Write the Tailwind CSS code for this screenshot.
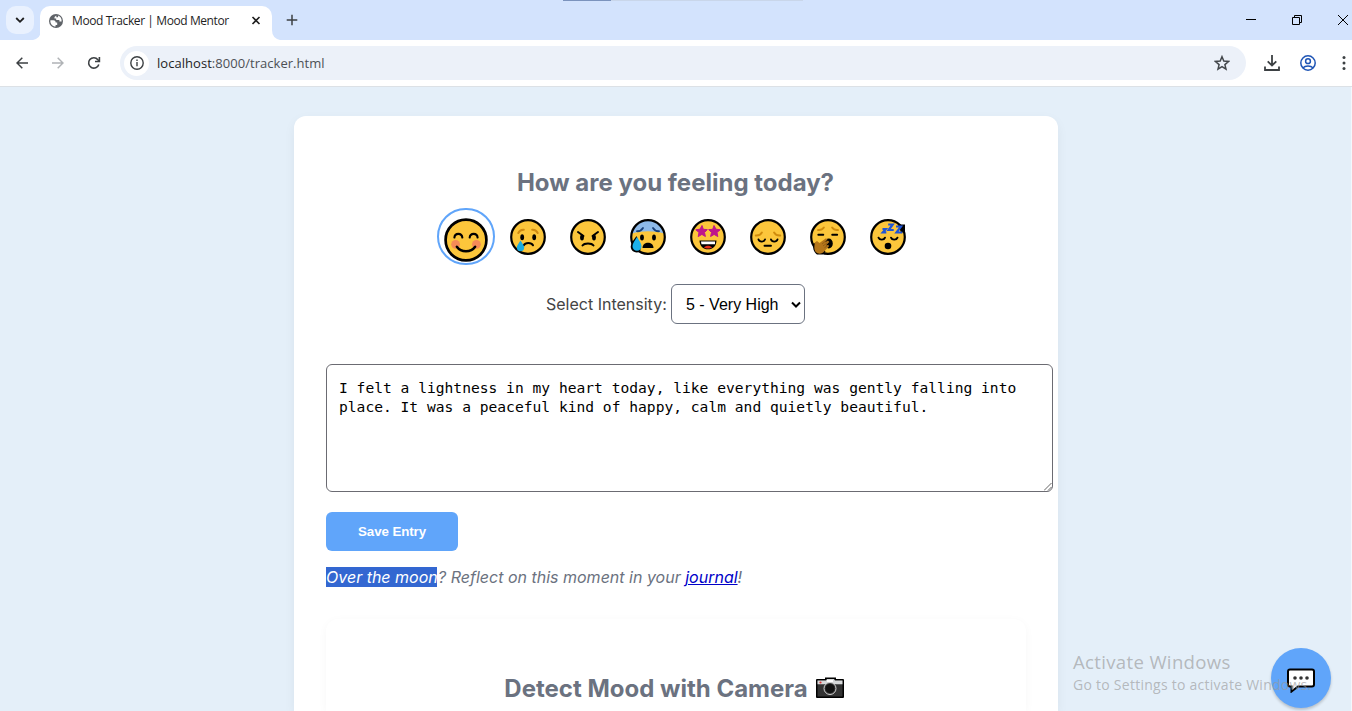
<!DOCTYPE html>
<html lang="en">
<head>
<meta charset="utf-8">
<title>Mood Tracker | Mood Mentor</title>
<script src="https://cdn.jsdelivr.net/npm/@tailwindcss/browser@4"></script>
</head>
<body class="relative flex h-[711px] w-[1352px] flex-col overflow-hidden bg-[#e4eff9] font-['Inter',sans-serif]">

<!-- Tab strip -->
<header class="relative flex h-10 shrink-0 items-start bg-[#d3e3fd] pt-1.5 pl-1.5">
  <div class="absolute top-0 left-[563px] h-px w-12 bg-[#7b93bd]"></div>
  <div class="absolute top-0 left-[611px] h-px w-[192px] bg-[#c9d6ea]"></div>
  <button class="flex h-7 w-7 items-center justify-center rounded-[10px] bg-[#e9f1fe]">
    <svg class="h-[10px] w-[10px]" viewBox="0 0 10 10" fill="none" stroke="#1f1f1f" stroke-width="1.8"><path d="M1.2 3 5 6.8 8.8 3"/></svg>
  </button>
  <svg class="mt-6 -ml-px h-[10px] w-2 shrink-0" viewBox="0 0 8 10"><path d="M8 0v10H0Q8 8 8 0Z" fill="#fff"/></svg>
  <div class="-ml-px flex h-[34px] w-[232px] items-center rounded-t-[10px] bg-white pr-2.5 pb-[5px] pl-[9px]">
    <svg class="h-[14px] w-[14px] shrink-0" viewBox="0 0 14 14"><circle cx="7" cy="7" r="7" fill="#5f6368"/><path d="M7.300 1.400 5.500 3.100v1.300h1.700v1.500h3.200v1.600h2.200c.3-2.600-1-5.100-3.500-5.900V3.200H7.300ZM1.400 6.200h2.900c1.800 0 2.400 1.200 2.400 2.400h1.500v2.300H6.600v1.700C3.500 12.500 1 9.500 1.400 6.200Z" fill="#fff"/></svg>
    <span class="ml-[9px] w-[160px] text-[12px] leading-4 tracking-[-0.41px] whitespace-nowrap text-[#1f1f1f] font-['Open_Sans',sans-serif]">Mood Tracker | Mood Mentor</span>
    <svg class="ml-auto h-3 w-3 shrink-0" viewBox="0 0 12 12" stroke="#1f1f1f" stroke-width="1.6"><path d="m2.500 2 7 7m0-7-7 7"/></svg>
  </div>
  <svg class="mt-6 h-[10px] w-2 shrink-0" viewBox="0 0 8 10"><path d="M0 0v10H8Q0 8 0 0Z" fill="#fff"/></svg>
  <svg class="mt-2 ml-1.5 h-3 w-3" viewBox="0 0 12 12" stroke="#3c4043" stroke-width="1.5"><path d="M6 .7v10.6M.7 6h10.6"/></svg>
  <div class="ml-auto flex h-7 items-center gap-[34px] pr-1 text-black">
    <svg class="h-3 w-3" viewBox="0 0 12 12" stroke="#000"><path d="M1 5.500h10"/></svg>
    <svg class="h-3 w-3" viewBox="0 0 12 12" fill="none" stroke="#000"><path d="M1.500 3.500h7v7h-7zM3.500 3.500v-2h7v7h-2"/></svg>
    <svg class="-mr-px h-3 w-3" viewBox="0 0 12 12" stroke="#000"><path d="m1 1 10 10M11 1 1 11"/></svg>
  </div>
</header>

<!-- Toolbar -->
<div class="flex h-[47px] shrink-0 items-center border-b border-[#dce1e6] bg-white pl-4">
  <svg class="h-3 w-3" viewBox="0 0 12 12" fill="none" stroke="#3c4043" stroke-width="1.5"><path d="M6.300.8 1 6l5.300 5.200M1 6h11"/></svg>
  <svg class="ml-6 h-3 w-3" viewBox="0 0 12 12" fill="none" stroke="#b0b3b6" stroke-width="1.5"><path d="M5.700.8 11 6l-5.300 5.200M11 6H0"/></svg>
  <svg class="ml-[23px] h-[14px] w-[14px]" viewBox="0 0 14 14" fill="none" stroke="#3c4043" stroke-width="1.6"><path d="M11.800 8.500A5.200 5.200 0 1 1 10.900 3.700L12.300 5.200"/><path d="M12.400 1v4.500H8"/></svg>
  <div class="ml-[19px] flex h-[34px] w-[1126px] items-center rounded-full bg-[#ecf1f9] pr-4 pl-1">
    <span class="flex h-[25px] w-[25px] items-center justify-center rounded-full bg-white">
      <svg class="h-[14px] w-[14px]" viewBox="0 0 14 14" fill="none" stroke="#3c4043" stroke-width="1.4"><circle cx="7" cy="7" r="6.200"/><path d="M7 6v4.300M7 3.500V5"/></svg>
    </span>
    <span class="ml-2 text-[13px] leading-5 tracking-[0.04px] whitespace-nowrap text-[#4c5055] font-['Open_Sans',sans-serif]"><span class="text-[#1f1f1f]">localhost</span>:8000/tracker.html</span>
    <svg class="ml-auto h-4 w-4" viewBox="0 0 16 16" fill="none" stroke="#43474b" stroke-width="1.5"><path d="m8 1.700 1.800 4.400 4.700.4-3.600 3.100 1.100 4.600L8 11.700l-4 2.500 1.100-4.600L1.500 6.500l4.700-.4Z"/></svg>
  </div>
  <svg class="ml-[18px] h-4 w-4" viewBox="0 0 16 16" fill="none" stroke="#3c4043" stroke-width="1.800"><path d="M8 0v10.200M3.700 6.300 8 10.500l4.300-4.200M1 11.500V15h14v-3.500"/></svg>
  <svg class="ml-5 h-4 w-4" viewBox="0 0 16 16" fill="none" stroke="#1f55b5" stroke-width="1.500"><circle cx="8" cy="8" r="7.200"/><circle cx="8" cy="6.200" r="2.400"/><path d="M2.800 12.900c2.600-2.700 7.800-2.700 10.400 0"/></svg>
  <svg class="ml-[26px] h-4 w-1" viewBox="0 0 4 16" fill="#3c4043"><circle cx="2" cy="2.500" r="1.500"/><circle cx="2" cy="8" r="1.500"/><circle cx="2" cy="13.500" r="1.500"/></svg>
</div>

<!-- Page -->
<main class="flex min-h-0 flex-1 justify-center pt-[29px]">
  <section class="h-[595px] w-[764px] rounded-t-xl bg-white px-8 pt-[51px] shadow-[0_4px_12px_rgba(0,0,0,0.05)]">
    <h2 class="-ml-px text-center text-[24px] leading-8 font-bold text-[#6b7280]">How are you feeling today?</h2>

    <div class="mt-[9px] flex h-[57px] items-center pl-[111px]">
      <div class="flex h-[57px] w-[58px] shrink-0 items-end justify-center rounded-full border-2 border-[#60a5fa] pb-px">
        <svg class="h-[44px] w-[44px]" viewBox="0 0 36 36"><circle cx="18" cy="18" r="16.700" fill="#fcc63b" stroke="#000" stroke-width="2.200"/><circle cx="9.500" cy="21.500" r="3.600" fill="#f58a57"/><circle cx="26.500" cy="21.500" r="3.600" fill="#f58a57"/><g fill="none" stroke="#000" stroke-width="1.700" stroke-linecap="round"><path d="M8.500 16c.4-4 6-4 6.500 0M21 16c.5-4 6.100-4 6.500 0"/><path d="M10.500 23.500c3.500 5 11.500 5 15 0" stroke-width="2"/></g></svg>
      </div>
      <div class="ml-[14.5px] flex gap-6">
        <svg class="h-9 w-9" viewBox="0 0 36 36"><circle cx="18" cy="18" r="16.800" fill="#fcc63b" stroke="#000" stroke-width="2.200"/><g fill="none" stroke="#cf8b12" stroke-width="2" stroke-linecap="round"><path d="M8.300 14c1-2.200 3.300-3.500 5.500-3.300M22.200 10.700c2.300-.2 4.500 1.100 5.500 3.300"/></g><ellipse cx="12.200" cy="18.300" rx="1.900" ry="3"/><ellipse cx="24.200" cy="18.300" rx="1.900" ry="3"/><path d="M13.800 26.300c1.500-3 7.500-3 9.200 0" fill="none" stroke="#000" stroke-width="2" stroke-linecap="round"/><path d="M10.500 21.500c-1.800 3-3.700 5-3.700 7a3.700 3.700 0 0 0 7.400 0c0-2-1.900-4-3.700-7Z" fill="#1aacdf"/></svg>
        <svg class="h-9 w-9" viewBox="0 0 36 36"><circle cx="18" cy="18" r="16.800" fill="#fcc63b" stroke="#000" stroke-width="2.200"/><g fill="none" stroke="#000" stroke-width="2" stroke-linecap="round"><path d="m8 13 5.500 4M28 13l-5.500 4M12.500 26.500c1.800-2.700 9.200-2.700 11 0"/></g><ellipse cx="12" cy="18.500" rx="1.900" ry="2.900"/><ellipse cx="24" cy="18.500" rx="1.900" ry="2.900"/></svg>
        <svg class="h-9 w-9 overflow-visible" viewBox="0 0 36 36"><circle cx="18" cy="18" r="16.800" fill="#fcc63b"/><path d="M1.800 14.500C3 6.500 10 1.200 18 1.200s15 5.300 16.200 13.300C24 11.500 12 11.500 1.800 14.500Z" fill="#8db9e8"/><circle cx="18" cy="18" r="16.800" fill="none" stroke="#000" stroke-width="2.200"/><path d="M6.500 17c-3 4-5.800 7.500-5.800 10.800A6 6 0 0 0 10 32.500l1-5Z" fill="#000"/><path d="M7 18c-2.300 4-4.500 6.500-4.500 9.200a4.500 4.500 0 0 0 9 0C11.500 24.500 9.300 22 7 18Z" fill="#1db2ea"/><g fill="none" stroke="#173f78" stroke-width="1.800" stroke-linecap="round"><path d="M7 12.200c2.500.2 4.600-.9 6-3.200M29 12.200c-2.500.2-4.600-.9-6-3.200"/></g><ellipse cx="12" cy="18.500" rx="1.900" ry="3"/><ellipse cx="24" cy="18.500" rx="1.900" ry="3"/><path d="M12.500 29c0-7 11-7 11 0Z"/></svg>
        <svg class="h-9 w-9" viewBox="0 0 36 36"><circle cx="18" cy="18" r="16.800" fill="#fcc63b" stroke="#000" stroke-width="2.200"/><g fill="#bf168b" stroke="#bf168b"><path d="m12 6.500 1.300 3.800 4 .3-2.800 2.900.9 4-3.500-2.100-3.700 2.200.8-4.200-3.200-2.600 4.200-.6Z"/><path d="m24 6.500-1.300 3.800-4 .3 2.800 2.900-.9 4 3.500-2.100 3.700 2.200-.8-4.200 3.200-2.600-4.200-.6Z"/></g><path d="M9.500 21.500h17c-.2 5.500-3.500 8.800-8.500 8.800s-8.300-3.300-8.500-8.800Z"/><path d="M11 22.500h14v2.800H11.500Z" fill="#fff"/><path d="M14 28.500c2-2.200 6-2.200 8 0-2 1.400-6 1.400-8 0Z" fill="#e52f19"/></svg>
        <svg class="h-9 w-9" viewBox="0 0 36 36"><circle cx="18" cy="18" r="16.800" fill="#fcc63b" stroke="#000" stroke-width="2.200"/><g fill="none" stroke-width="1.900" stroke-linecap="round"><path d="M5.700 16.500c2.800.2 5-.9 6.200-3M30.300 16.500c-2.800.2-5-.9-6.200-3" stroke="#d08c0d"/><path d="M8.500 20.500c1 2.800 5.500 2.800 6.500 0M21 20.500c1 2.800 5.500 2.800 6.500 0M14.500 26.800h6.500" stroke="#000"/></g></svg>
        <svg class="h-9 w-9 overflow-visible" viewBox="0 0 36 36"><circle cx="18" cy="18" r="16.800" fill="#fcc63b" stroke="#000" stroke-width="2.200"/><g fill="none" stroke-width="1.900" stroke-linecap="round"><path d="M8 11c2.500.3 4.600-.6 5.900-2.500M28 11c-2.500.3-4.600-.6-5.900-2.500" stroke="#d08c0d"/><path d="M8.300 15.800h5M22.200 15.800h5" stroke="#000"/></g><ellipse cx="18.800" cy="24.500" rx="4" ry="5"/><path d="M3.500 24.500c-1 4.500 0 8.500 3.500 11h5.500l3-3-8-9Z"/><path d="m4.800 23.500 2.200-1.500 2.500 2 6.500-4.800 1.500 1.400-3 3 3.500-2 1.300 1.500-3.500 3.500 2.500-.8.700 1.500-5.500 6c-2.300 2-6 1.800-8-.5C4 30.800 4.200 27 4.800 23.500Z" fill="#b5761a"/><path d="m12 25 3.500-2.800M13 27l4-3M14.500 28.700l3-2" stroke="#7c4d10" stroke-width=".6"/></svg>
        <svg class="h-9 w-9 overflow-visible" viewBox="0 0 36 36"><circle cx="18" cy="18" r="16.800" fill="#fcc63b" stroke="#000" stroke-width="2.200"/><path d="M28 5.500h7v8H31Z"/><g fill="none" stroke="#000" stroke-width="1.900" stroke-linecap="round"><path d="M8.500 18.700c1 2.600 5.500 2.600 6.500 0M21 18.700c1 2.600 5.500 2.600 6.500 0"/></g><circle cx="18" cy="27" r="3.300"/><g fill="none" stroke="#1f55d7" stroke-width="2.200"><path d="M12.500 10h3.300l-3 3.400h3.500M18.200 5.500h4.500l-4 5.500h5M26 7.500h5l-4.500 6h5.800"/></g></svg>
      </div>
    </div>

    <div class="mt-[19px] flex h-10 items-center pl-[220px]">
      <label class="w-[125px] text-[16px] whitespace-nowrap text-[#444]">Select Intensity:</label>
      <div class="flex h-10 w-[134px] items-center rounded-[6px] border border-[#6b7280] bg-white pt-px pl-3.5 text-[16px] text-black font-['Liberation_Sans',sans-serif]">
        <span class="whitespace-nowrap">5 - Very High</span>
        <svg class="mr-[3px] ml-auto h-[10px] w-[10px]" viewBox="0 0 10 10" fill="none" stroke="#000" stroke-width="2"><path d="M1 2.500 5 6.500l4-4"/></svg>
      </div>
    </div>

    <div class="relative mt-10 h-32 w-[727px] rounded-[6px] border border-[#6b6b72] bg-white px-3 pt-[13px] text-[14.620px] leading-[19px] whitespace-pre text-black font-['DejaVu_Sans_Mono',monospace]">I felt a lightness in my heart today, like everything was gently falling into
place. It was a peaceful kind of happy, calm and quietly beautiful.<svg class="absolute right-0 bottom-0 h-2 w-2" viewBox="0 0 8 8" stroke="#555" stroke-width=".9"><path d="M0 7.500 7.500 0M4 7.500 7.500 4"/></svg></div>

    <button class="mt-5 flex h-[39px] w-[132px] items-center justify-center rounded-[6px] bg-[#60a5fa] text-[13.330px] font-bold tracking-[-0.1px] text-white font-['Liberation_Sans',sans-serif]">Save Entry</button>

    <p class="mt-4 text-[16px] leading-5 whitespace-nowrap text-[#6b7280] italic"><span class="mr-px inline-block w-[111px] bg-[#3367d1] text-white">Over the moon</span>? Reflect on this moment in your <a class="text-[#0000c8] underline">journal</a>!</p>

    <div class="mt-8 flex h-[92px] items-start justify-center rounded-t-xl bg-white pt-[54px] shadow-[0_2px_10px_rgba(0,0,0,0.035)] [clip-path:inset(-12px_-12px_0_-12px)]">
      <h2 class="-ml-1 text-[24px] leading-8 font-bold whitespace-nowrap text-[#6b7280]">Detect Mood with Camera</h2>
      <svg class="mt-1 ml-2 h-[22px] w-[28px]" viewBox="0 0 28 22"><path d="M1 2h8V.5h11V2h7q1 0 1 1v17q0 1-1 1H1q-1 0-1-1V3q0-1 1-1Z"/><path d="M1.500 3.500h25v16h-25Z" fill="#333"/><path d="M1.500 3.500H10L11 2h7l1 1.500h7.500v3.800h-25Z" fill="#d7d9da"/><path d="M11 3h6v2h-6Z" fill="#fff"/><circle cx="4.500" cy="5.500" r="1.100" fill="#dc3336"/><circle cx="14" cy="11.500" r="6" fill="#333" stroke="#d2d2d2" stroke-width="1"/><circle cx="14" cy="11.500" r="4.500" fill="#111"/></svg>
    </div>
  </section>
</main>

<!-- Page scrollbar edge -->
<div class="absolute top-[87px] right-0 h-[624px] w-px bg-[#f4f8fc]"></div>

<!-- Chat button -->
<button class="absolute top-[648px] left-[1271px] flex h-[60px] w-[60px] items-center justify-center rounded-full bg-[#60a5fa] shadow-[0_2px_3px_rgba(0,0,0,0.2)]">
  <svg class="mt-1 h-[25px] w-[28px]" viewBox="0 0 28 25"><path d="M3 1.500h22q2 0 2 2v13q0 2-2 2H11l-6.500 5v-5H3q-2 0-2-2v-13q0-2 2-2Z" fill="#fff" stroke="#000" stroke-width="2"/><g fill="#333"><circle cx="8" cy="10" r="1.800"/><circle cx="14" cy="10" r="1.800"/><circle cx="20" cy="10" r="1.800"/></g></svg>
</button>

<!-- Activation watermark -->
<div class="absolute top-[650px] left-[1073px] whitespace-nowrap text-[#999]/65 font-['Open_Sans',sans-serif]">
  <div class="text-[18.600px] leading-6 tracking-[0.32px]">Activate Windows</div>
  <div class="text-[14px] leading-[22px] tracking-[0.26px]">Go to Settings to activate Windows.</div>
</div>
</body>
</html>
